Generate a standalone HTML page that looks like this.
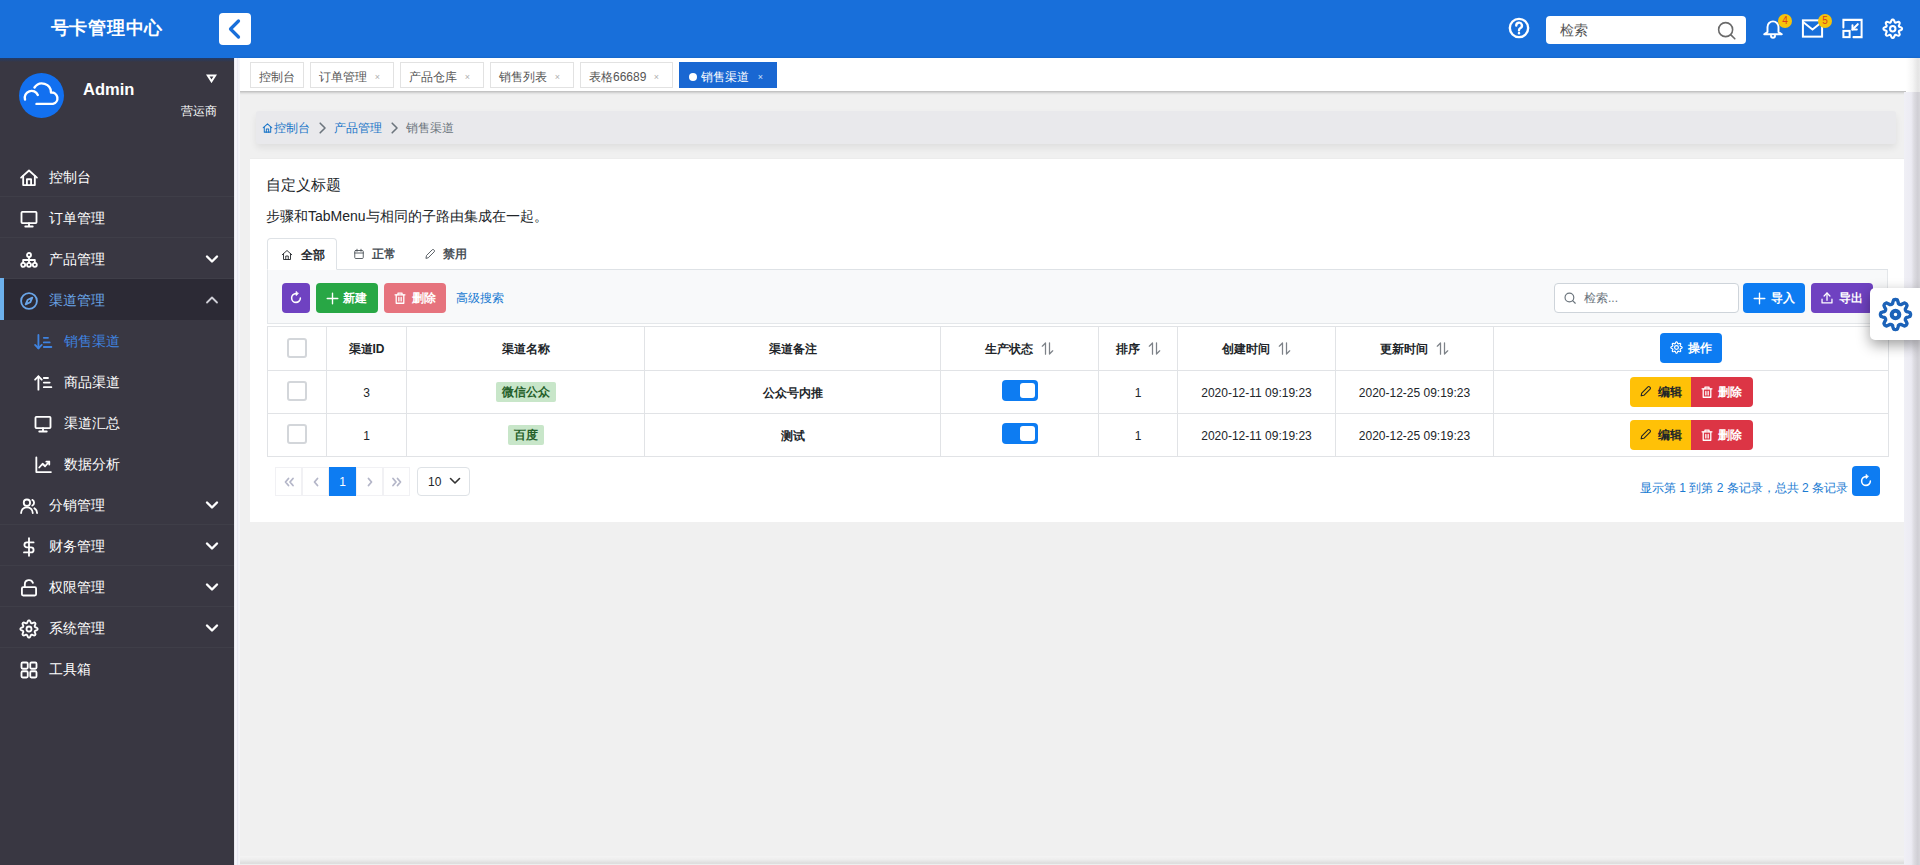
<!DOCTYPE html>
<html lang="zh">
<head>
<meta charset="utf-8">
<title>号卡管理中心</title>
<style>
*{box-sizing:border-box;margin:0;padding:0}
html,body{width:1920px;height:865px;overflow:hidden}
body{font-family:"Liberation Sans",sans-serif;font-size:12px;color:#212529;background:#f0f0f0;position:relative}
svg{display:block}
.ic{fill:none;stroke:currentColor;stroke-width:2;stroke-linecap:round;stroke-linejoin:round}
.abs{position:absolute}
/* header */
#hdr{position:absolute;left:0;top:0;width:1920px;height:58px;background:#186fda}
#logo{position:absolute;left:50.5px;top:17px;font-size:18.4px;letter-spacing:.8px;font-weight:bold;color:#fff;line-height:22px;white-space:nowrap}
#collapse{position:absolute;left:219px;top:13px;width:32px;height:32px;background:#fff;border-radius:4px;color:#186fda}
#hsearch{position:absolute;left:1546px;top:16px;width:200px;height:28px;background:#fff;border-radius:4px}
#hsearch span{position:absolute;left:14px;top:6px;font-size:14px;line-height:16px;color:#555}
.badge{position:absolute;width:14px;height:14px;border-radius:7px;background:#f6c30c;color:#d9401a;font-size:10px;line-height:14px;text-align:center}
/* sidebar */
#side{position:absolute;left:0;top:58px;width:234px;height:807px;background:#393742;color:#fff}
#side:before{content:"";position:absolute;left:0;top:0;width:234px;height:4px;background:linear-gradient(180deg,rgba(24,60,120,.75),rgba(40,40,50,0))}
#strip{position:absolute;left:234px;top:58px;width:6px;height:807px;background:linear-gradient(90deg,#dcdce6 0,#f7f7fd 18%,#f4f4fb 45%,#e6e6f1 62%,#f8f8fd 80%,#f3f3f6 100%);z-index:5}
.mi{position:absolute;left:0;width:234px;height:41px;border-bottom:1px solid rgba(255,255,255,.035);font-size:14.4px;line-height:42px;color:#fff}
.mi svg{position:absolute;left:19px;top:11.5px;width:20px;height:20px;stroke-width:2.2}
.mi span{position:absolute;left:49px;top:0;white-space:nowrap}
.mi .chev{left:205px;top:14px;width:14px;height:14px}
.mi.sub svg{left:33px}
.mi.sub span{left:64px}
.mi.sub{border-bottom:none}
.mi.act{background:#2c2a35;color:#6aa5e8;border-bottom-color:transparent}
.mi.act:before{content:"";position:absolute;left:0;top:0;width:4px;height:42px;top:-1px;background:#6cb0ec}
.mi.act .chev{color:#d0d0d8}
.mi.cur{color:#3f83e0}
/* main */
#tabs{position:absolute;left:238px;top:58px;width:1682px;height:33px;background:#fff;box-shadow:0 1px 3px rgba(0,0,0,.3)}
.tab{position:absolute;top:4px;height:26px;border:1px solid #e2e2e2;background:#fff;font-size:12px;line-height:29.500px;color:#555;padding-left:8px;white-space:nowrap}
.tab i{position:absolute;right:13px;top:0;font-style:normal;font-size:9px;color:#b0b0b0}
.tab.on{background:#1967d2;border-color:#1967d2;color:#fff}
.tab.on i{color:#cfe0f8}
#bc{position:absolute;left:256px;top:111px;width:1640px;height:33px;background:#e9e9ec;border-radius:3px;font-size:12px;line-height:34px;box-shadow:0 4px 7px rgba(0,0,0,.07)}
#bc span,#bc svg{position:absolute}
#card{position:absolute;left:250px;top:158px;width:1654px;height:364px;background:#fff;box-shadow:inset 0 1px 0 #ececec}
#vscroll{position:absolute;left:1904px;top:92px;width:16px;height:773px;background:linear-gradient(90deg,#f0f0f6 0,#ecebf3 45%,#dddce2 62%,#d0cfd5 85%,#d6d5da 100%);z-index:4}
#vscroll2{position:absolute;left:1906px;top:58px;width:14px;height:34px;background:linear-gradient(90deg,#fff 0,#f6f6f6 45%,#e4e4e4 85%,#e9e9e9 100%);z-index:4}
#hscroll{position:absolute;left:240px;top:856px;width:1664px;height:9px;background:linear-gradient(180deg,#f4f4f4 0,#ededed 40%,#dcdcdc 82%,#f6f6f6 100%);z-index:3}
#fgear{position:absolute;left:1870px;top:288px;width:50px;height:52px;background:#fff;border-radius:5px 0 0 5px;box-shadow:0 5px 14px rgba(0,0,0,.38);color:#1c62b8;z-index:10}

/* card */
#card .ttl{position:absolute;left:16px;top:17px;font-size:15px;line-height:20px;color:#212529}
#card .desc{position:absolute;left:16px;top:49px;font-size:14px;line-height:18px;color:#212529}
#stline{position:absolute;left:17px;top:111px;width:1621px;height:1px;background:#dee2e6}
.st{position:absolute;top:80px;height:32px;font-size:12px;line-height:32px;color:#495057;white-space:nowrap;font-weight:bold}
.st svg{position:absolute;top:10px;width:12px;height:12px}
.st span{position:absolute;top:0}
.st.on{border:1px solid #dee2e6;border-bottom-color:#fff;border-radius:4px 4px 0 0;background:#fff;color:#212529;font-weight:bold}
#tb{position:absolute;left:17px;top:112px;width:1621px;height:54px;background:#f8f9fa;border:1px solid #e4e7ea;border-top:none}
.btn{position:absolute;top:125px;height:30px;border-radius:4px;color:#fff;font-size:12px;line-height:30px;white-space:nowrap;font-weight:bold}
.btn svg{position:absolute}
.btn span{position:absolute;top:0}
table{position:absolute;left:17px;top:168px;border-collapse:collapse;table-layout:fixed;width:1622px}
td,th{border:1px solid #e1e3e6;text-align:center;vertical-align:middle;font-size:12px;color:#212529;padding:2px 0 0 0;position:relative}
th{height:44px;font-weight:bold}
td{height:43px}
.cb{display:inline-block;width:20px;height:20px;border:2px solid #d3d6da;border-radius:3px;background:#fff;vertical-align:middle;position:relative;top:-2px}
.tag{display:inline-block;height:20px;line-height:20px;padding:0 6px;background:#c8e6c9;color:#256029;font-weight:bold;border-radius:2px;font-size:12px;position:relative;top:-1px}
.sw{display:inline-block;width:36px;height:21px;border-radius:4px;background:#0d7cf2;position:relative;vertical-align:middle;top:-2.500px}
.sw:after{content:"";position:absolute;left:18px;top:3px;width:15px;height:15px;border-radius:3px;background:#fff}
.srt{display:inline-block;vertical-align:middle;margin-left:8px;color:#7d8288;position:relative;top:-1.500px}
.pg{position:absolute;top:309px;width:27px;height:29px;border:1px solid #f1f1f4;background:#fff;color:#b4b6c8}
.pg svg{position:absolute;left:6px;top:8px}
</style>
</head>
<body>

<!-- ============ HEADER ============ -->
<div id="hdr">
  <div id="logo">号卡管理中心</div>
  <div id="collapse"><svg class="ic" viewBox="0 0 32 32" width="32" height="32" style="stroke-width:3.2"><path d="M19.5 8 L11.5 16 L19.5 24"/></svg></div>
  
  <!-- help -->
  <svg class="ic abs" style="left:1508px;top:17px;color:#fff;stroke-width:2.600" width="22" height="22" viewBox="0 0 24 24"><circle cx="12" cy="12" r="10"/><path d="M9 9.3a3.1 3.1 0 1 1 4.6 2.7c-1 .6-1.6 1.2-1.6 2.4"/><path d="M12 17.4v.4"/></svg>
  <!-- search -->
  <div id="hsearch"><span>检索</span>
    <svg class="ic abs" style="left:170px;top:3.500px;color:#6a6a6a;stroke-width:1.800" width="21" height="21" viewBox="0 0 24 24"><circle cx="11" cy="11" r="8"/><path d="M17 17l4.5 4.5"/></svg>
  </div>
  <!-- bell -->
  <svg class="ic abs" style="left:1762px;top:17px;color:#fff;stroke-width:2.1" width="22" height="22" viewBox="0 0 24 24"><path d="M6 16.300V10.800a6 6 0 0 1 12 0v5.500l3.600 2.500H2.400z"/><path d="M9.800 20.500a2.200 2.200 0 0 0 4.400 0"/></svg>
  <div class="badge" style="left:1778px;top:14px">4</div>
  <!-- mail -->
  <svg class="ic abs" style="left:1801px;top:17px;color:#fff;stroke-width:2.1;stroke-linejoin:miter" width="23" height="23" viewBox="0 0 24 24"><rect x="2" y="3.5" width="20" height="17"/><path d="M2.5 5.5L12 13l9.5-7.5"/></svg>
  <div class="badge" style="left:1818px;top:14px">5</div>
  <!-- fullscreen exit -->
  <svg class="ic abs" style="left:1841px;top:17px;color:#fff;stroke-width:2.1;stroke-linejoin:miter" width="23" height="23" viewBox="0 0 24 24"><path d="M2.5 11V3h19v18H13"/><rect x="2.5" y="14.5" width="6.5" height="6.5"/><path d="M17.5 7.5L12 13"/><path d="M12 8.5V13h4.5"/></svg>
  <!-- gear -->
  <svg class="ic abs" style="left:1882px;top:18px;color:#fff;stroke-width:2.300" width="21.500" height="21.500" viewBox="0 0 24 24"><path d="M12.00 1.60L12.99 1.93L13.74 3.27L14.23 4.65L14.83 5.16L15.62 5.23L16.94 4.60L18.42 4.18L19.35 4.65L19.82 5.58L19.40 7.06L18.77 8.38L18.84 9.17L19.35 9.77L20.73 10.26L22.07 11.01L22.40 12.00L22.07 12.99L20.73 13.74L19.35 14.23L18.84 14.83L18.77 15.62L19.40 16.94L19.82 18.42L19.35 19.35L18.42 19.82L16.94 19.40L15.62 18.77L14.83 18.84L14.23 19.35L13.74 20.73L12.99 22.07L12.00 22.40L11.01 22.07L10.26 20.73L9.77 19.35L9.17 18.84L8.38 18.77L7.06 19.40L5.58 19.82L4.65 19.35L4.18 18.42L4.60 16.94L5.23 15.62L5.16 14.83L4.65 14.23L3.27 13.74L1.93 12.99L1.60 12.00L1.93 11.01L3.27 10.26L4.65 9.77L5.16 9.17L5.23 8.38L4.60 7.06L4.18 5.58L4.65 4.65L5.58 4.18L7.06 4.60L8.38 5.23L9.17 5.16L9.77 4.65L10.26 3.27L11.01 1.93Z"/><circle cx="12" cy="12" r="3"/></svg>

</div>

<!-- ============ SIDEBAR ============ -->
<div id="side">
  
  <div class="abs" style="left:19px;top:15px;width:45px;height:45px;border-radius:50%;background:#1270f0"></div>
  <svg class="ic abs" style="left:19px;top:15px;color:#fff;stroke-width:2.400" width="45" height="45" viewBox="0 0 45 45"><path d="M6 26.500a6.800 6.800 0 0 1 12.800-4.500"/><path d="M15.500 14.500a9 9 0 0 1 16.500 5a5.800 5.800 0 0 1 2 11.400H17.500"/></svg>
  <div class="abs" style="left:83px;top:21px;font-size:16.5px;font-weight:bold;line-height:20px;color:#fff">Admin</div>
  <svg class="ic abs" style="left:205.500px;top:16px;color:#fff;stroke-width:2;stroke-linejoin:miter" width="11" height="9" viewBox="0 0 11 9"><path d="M1.800 1.500h7.400L5.500 7.300z"/></svg>
  <div class="abs" style="left:181px;top:45px;font-size:12px;line-height:16px;color:#fff">营运商</div>
  <div class="mi" style="top:98px"><svg class="ic" viewBox="0 0 24 24" ><path d="M2.5 11.5L12 3l9.5 8.5"/><path d="M5 9.5V20.5h14V9.5"/><path d="M9.5 20.5v-7h5v7"/></svg><span>控制台</span></div>
  <div class="mi" style="top:139px"><svg class="ic" viewBox="0 0 24 24" ><rect x="3" y="3.5" width="18" height="13.5" rx="1"/><path d="M7.5 21h9M12 17v4"/></svg><span>订单管理</span></div>
  <div class="mi" style="top:180px"><svg class="ic" viewBox="0 0 24 24" ><circle cx="12" cy="6" r="2.400"/><circle cx="5" cy="17.800" r="2.400"/><circle cx="12" cy="17.800" r="2.400"/><circle cx="19" cy="17.800" r="2.400"/><path d="M12 8.400v7M5 15.400V12h14v3.400"/></svg><span>产品管理</span><svg class="ic chev" viewBox="0 0 14 14" style="stroke-width:2.4"><path d="M2 4.500l5 5 5-5"/></svg></div>
  <div class="mi act" style="top:221px"><svg class="ic" viewBox="0 0 24 24" ><circle cx="12" cy="12" r="9.5"/><path d="M16 8l-2.5 5.5L8 16l2.5-5.5z"/></svg><span>渠道管理</span><svg class="ic chev" viewBox="0 0 14 14" style="stroke-width:1.800"><path d="M2 9.500l5-5 5 5"/></svg></div>
  <div class="mi sub cur" style="top:262px"><svg class="ic" viewBox="0 0 24 24" ><path d="M6.5 3.5v16"/><path d="M2.5 15.5l4 4 4-4"/><path d="M13 7h5M13 12.5h7M13 18h9"/></svg><span>销售渠道</span></div>
  <div class="mi sub" style="top:303px"><svg class="ic" viewBox="0 0 24 24" ><path d="M6.5 20V4"/><path d="M2.5 8l4-4 4 4"/><path d="M13 6h5M13 11.5h7M13 17h9"/></svg><span>商品渠道</span></div>
  <div class="mi sub" style="top:344px"><svg class="ic" viewBox="0 0 24 24" ><rect x="3" y="3.5" width="18" height="13.5" rx="1"/><path d="M7.5 21h9M12 17v4"/></svg><span>渠道汇总</span></div>
  <div class="mi sub" style="top:385px"><svg class="ic" viewBox="0 0 24 24" ><path d="M4 3v17.5h17.5"/><path d="M7.5 15l4-4.5 3 3 5-5.5"/><path d="M16 8h3.5v3.5"/></svg><span>数据分析</span></div>
  <div class="mi" style="top:426px"><svg class="ic" viewBox="0 0 24 24" ><circle cx="9.5" cy="8" r="3.8"/><path d="M2.5 20.5a7 7 0 0 1 14 0"/><path d="M16 4.6a3.8 3.8 0 0 1 0 6.8"/><path d="M18.5 14.6a7 7 0 0 1 3.2 5.9"/></svg><span>分销管理</span><svg class="ic chev" viewBox="0 0 14 14" style="stroke-width:2.4"><path d="M2 4.500l5 5 5-5"/></svg></div>
  <div class="mi" style="top:467px"><svg class="ic" viewBox="0 0 24 24" ><path d="M12 1.5v21"/><path d="M17.5 6.5h-8a3 3 0 0 0 0 6h5a3 3 0 0 1 0 6h-8.500"/></svg><span>财务管理</span><svg class="ic chev" viewBox="0 0 14 14" style="stroke-width:2.4"><path d="M2 4.500l5 5 5-5"/></svg></div>
  <div class="mi" style="top:508px"><svg class="ic" viewBox="0 0 24 24" ><rect x="3.5" y="11" width="17" height="10" rx="1.5"/><path d="M7 11V7.5a5 5 0 0 1 9.700-1.700"/></svg><span>权限管理</span><svg class="ic chev" viewBox="0 0 14 14" style="stroke-width:2.4"><path d="M2 4.500l5 5 5-5"/></svg></div>
  <div class="mi" style="top:549px"><svg class="ic" viewBox="0 0 24 24" ><path d="M12.00 1.60L12.99 1.93L13.74 3.27L14.23 4.65L14.83 5.16L15.62 5.23L16.94 4.60L18.42 4.18L19.35 4.65L19.82 5.58L19.40 7.06L18.77 8.38L18.84 9.17L19.35 9.77L20.73 10.26L22.07 11.01L22.40 12.00L22.07 12.99L20.73 13.74L19.35 14.23L18.84 14.83L18.77 15.62L19.40 16.94L19.82 18.42L19.35 19.35L18.42 19.82L16.94 19.40L15.62 18.77L14.83 18.84L14.23 19.35L13.74 20.73L12.99 22.07L12.00 22.40L11.01 22.07L10.26 20.73L9.77 19.35L9.17 18.84L8.38 18.77L7.06 19.40L5.58 19.82L4.65 19.35L4.18 18.42L4.60 16.94L5.23 15.62L5.16 14.83L4.65 14.23L3.27 13.74L1.93 12.99L1.60 12.00L1.93 11.01L3.27 10.26L4.65 9.77L5.16 9.17L5.23 8.38L4.60 7.06L4.18 5.58L4.65 4.65L5.58 4.18L7.06 4.60L8.38 5.23L9.17 5.16L9.77 4.65L10.26 3.27L11.01 1.93Z"/><circle cx="12" cy="12" r="3"/></svg><span>系统管理</span><svg class="ic chev" viewBox="0 0 14 14" style="stroke-width:2.4"><path d="M2 4.500l5 5 5-5"/></svg></div>
  <div class="mi" style="top:590px;border-bottom:none"><svg class="ic" viewBox="0 0 24 24" ><rect x="3" y="3" width="7.500" height="7.500" rx="1.500"/><rect x="13.500" y="3" width="7.500" height="7.500" rx="1.500"/><rect x="3" y="13.500" width="7.500" height="7.500" rx="1.500"/><rect x="13.500" y="13.500" width="7.500" height="7.500" rx="1.500"/></svg><span>工具箱</span></div>

</div>
<div id="strip"></div>

<!-- ============ MAIN ============ -->
<div id="tabs">
    <div class="tab" style="left:12px;width:54px">控制台</div>
  <div class="tab" style="left:72px;width:84px">订单管理<i>×</i></div>
  <div class="tab" style="left:162px;width:84px">产品仓库<i>×</i></div>
  <div class="tab" style="left:252px;width:84px">销售列表<i>×</i></div>
  <div class="tab" style="left:342px;width:93px">表格66689<i>×</i></div>
  <div class="tab on" style="left:441px;width:98px"><b style="position:absolute;left:9px;top:9.500px;width:8px;height:8px;border-radius:50%;background:#fff"></b><span style="margin-left:13px">销售渠道</span><i>×</i></div>

</div>
<div id="bc">
  
  <svg class="ic" style="left:6px;top:11px;color:#1b76c8;stroke-width:2.200" width="11" height="12" viewBox="0 0 24 24"><path d="M2.500 11.500L12 3l9.500 8.500"/><path d="M5 9.500V21h14V9.500"/><path d="M9.500 21v-7h5v7"/></svg>
  <span style="left:18px;color:#1b76c8">控制台</span>
  <svg class="ic" style="left:62px;top:10px;color:#6c757d;stroke-width:1.600" width="9" height="14" viewBox="0 0 9 14"><path d="M2.200 2.200l4.800 4.800L2.200 11.800"/></svg>
  <span style="left:78px;color:#1b76c8">产品管理</span>
  <svg class="ic" style="left:134px;top:10px;color:#6c757d;stroke-width:1.600" width="9" height="14" viewBox="0 0 9 14"><path d="M2.200 2.200l4.800 4.800L2.200 11.800"/></svg>
  <span style="left:150px;color:#6c757d">销售渠道</span>

</div>
<div id="card">
  
  <div class="ttl">自定义标题</div>
  <div class="desc">步骤和TabMenu与相同的子路由集成在一起。</div>
  <div id="stline"></div>
  <div class="st on" style="left:17px;width:70px"><svg class="ic" style="left:13px;stroke-width:1.800" width="12" height="12" viewBox="0 0 24 24"><path d="M2.500 11.500L12 3l9.500 8.500"/><path d="M5 9.500V21h14V9.500"/><path d="M9.500 21v-7h5v7"/></svg><span style="left:33px">全部</span></div>
  <div class="st" style="left:87px;width:72px"><svg class="ic" style="left:16px;stroke-width:1.800" width="12" height="12" viewBox="0 0 24 24"><rect x="3.500" y="5" width="17" height="16" rx="2"/><path d="M3.500 10h17M8 2.500v4M16 2.500v4"/></svg><span style="left:35px">正常</span></div>
  <div class="st" style="left:159px;width:72px"><svg class="ic" style="left:15px;stroke-width:1.800" width="12" height="12" viewBox="0 0 24 24"><path d="M4 20l1-5L16.500 3.500a2.100 2.100 0 0 1 3 0l1 1a2.100 2.100 0 0 1 0 3L9 19z"/></svg><span style="left:34px">禁用</span></div>
  <div id="tb"></div>

  <div class="btn" style="left:32px;width:28px;background:#6f42c1"><svg class="ic" style="left:7px;top:8px;stroke-width:2.600" width="14" height="14" viewBox="0 0 24 24"><path d="M19.500 12A7.500 7.500 0 1 1 12 4.500"/><path d="M12 1v7l4-3.500z" fill="currentColor" stroke-width="1"/></svg></div>
  <div class="btn" style="left:66px;width:62px;background:#28a745"><svg class="ic" style="left:9px;top:8px;stroke-width:2.200" width="15" height="15" viewBox="0 0 24 24"><path d="M12 3.500v17M3.500 12h17"/></svg><span style="left:27px">新建</span></div>
  <div class="btn" style="left:134px;width:62px;background:#e6737d"><svg class="ic" style="left:9px;top:8px;stroke-width:2.200" width="14" height="14" viewBox="0 0 24 24"><path d="M3.500 6.500h17"/><path d="M8.500 6.500V3.500h7v3"/><path d="M5.500 6.500V21h13V6.500"/><path d="M10 11v6M14 11v6"/></svg><span style="left:28px">删除</span></div>
  <div class="abs" style="left:206px;top:125px;line-height:30px;font-size:12px;color:#1a7bd2">高级搜索</div>
  <div class="abs" style="left:1304px;top:125px;width:185px;height:30px;border:1px solid #ced4da;border-radius:4px;background:#fff"><svg class="ic abs" style="left:8px;top:7px;color:#6c757d;stroke-width:2" width="14" height="14" viewBox="0 0 24 24"><circle cx="11" cy="11" r="7.500"/><path d="M16.500 16.500L21 21"/></svg><span class="abs" style="left:29px;top:0;line-height:28px;font-size:12px;color:#6c757d">检索...</span></div>
  <div class="btn" style="left:1493px;width:62px;background:#0d7cf2"><svg class="ic" style="left:9px;top:8px;stroke-width:2.200" width="15" height="15" viewBox="0 0 24 24"><path d="M12 3.500v17M3.500 12h17"/></svg><span style="left:28px">导入</span></div>
  <div class="btn" style="left:1561px;width:62px;background:#6f42c1"><svg class="ic" style="left:9px;top:8px;stroke-width:2.200" width="14" height="14" viewBox="0 0 24 24"><path d="M3.500 14v6.500h17V14"/><path d="M12 16V3.500"/><path d="M7 8.500l5-5 5 5"/></svg><span style="left:28px">导出</span></div>

  <table>
   <colgroup><col style="width:59px"><col style="width:80px"><col style="width:238px"><col style="width:296px"><col style="width:158px"><col style="width:79px"><col style="width:158px"><col style="width:158px"><col style="width:395px"></colgroup>
   <tr><th><i class="cb"></i></th><th>渠道ID</th><th>渠道名称</th><th>渠道备注</th><th>生产状态<svg class="ic srt" style="stroke-width:1.250" width="13" height="13" viewBox="0 0 13 13"><path d="M4.500 12.200V1M4.500 1L1.300 4.200"/><path d="M8.500 0.800v11.200M8.500 12l3.200-3.200"/></svg></th><th>排序<svg class="ic srt" style="stroke-width:1.250" width="13" height="13" viewBox="0 0 13 13"><path d="M4.500 12.200V1M4.500 1L1.300 4.200"/><path d="M8.500 0.800v11.200M8.500 12l3.200-3.200"/></svg></th><th>创建时间<svg class="ic srt" style="stroke-width:1.250" width="13" height="13" viewBox="0 0 13 13"><path d="M4.500 12.200V1M4.500 1L1.300 4.200"/><path d="M8.500 0.800v11.200M8.500 12l3.200-3.200"/></svg></th><th>更新时间<svg class="ic srt" style="stroke-width:1.250" width="13" height="13" viewBox="0 0 13 13"><path d="M4.500 12.200V1M4.500 1L1.300 4.200"/><path d="M8.500 0.800v11.200M8.500 12l3.200-3.200"/></svg></th><th></th></tr>
   <tr><td><i class="cb"></i></td><td>3</td><td><span class="tag">微信公众</span></td><td><b>公众号内推</b></td><td><i class="sw"></i></td><td>1</td><td>2020-12-11 09:19:23</td><td>2020-12-25 09:19:23</td><td></td></tr>
   <tr><td><i class="cb"></i></td><td>1</td><td><span class="tag">百度</span></td><td><b>测试</b></td><td><i class="sw"></i></td><td>1</td><td>2020-12-11 09:19:23</td><td>2020-12-25 09:19:23</td><td></td></tr>
  </table>
  <div class="btn" style="left:1410px;top:175px;width:62px;height:30px;line-height:30px;background:#0d7cf2"><svg class="ic" style="left:10px;top:8px;stroke-width:2.200" width="13" height="13" viewBox="0 0 24 24"><path d="M12.00 1.60L12.99 1.93L13.74 3.27L14.23 4.65L14.83 5.16L15.62 5.23L16.94 4.60L18.42 4.18L19.35 4.65L19.82 5.58L19.40 7.06L18.77 8.38L18.84 9.17L19.35 9.77L20.73 10.26L22.07 11.01L22.40 12.00L22.07 12.99L20.73 13.74L19.35 14.23L18.84 14.83L18.77 15.62L19.40 16.94L19.82 18.42L19.35 19.35L18.42 19.82L16.94 19.40L15.62 18.77L14.83 18.84L14.23 19.35L13.74 20.73L12.99 22.07L12.00 22.40L11.01 22.07L10.26 20.73L9.77 19.35L9.17 18.84L8.38 18.77L7.06 19.40L5.58 19.82L4.65 19.35L4.18 18.42L4.60 16.94L5.23 15.62L5.16 14.83L4.65 14.23L3.27 13.74L1.93 12.99L1.60 12.00L1.93 11.01L3.27 10.26L4.65 9.77L5.16 9.17L5.23 8.38L4.60 7.06L4.18 5.58L4.65 4.65L5.58 4.18L7.06 4.60L8.38 5.23L9.17 5.16L9.77 4.65L10.26 3.27L11.01 1.93Z"/><circle cx="12" cy="12" r="3.500"/></svg><span style="left:28px">操作</span></div>
  <div class="btn" style="left:1380px;top:219px;width:61px;background:#ffc107;color:#212529;border-radius:4px 0 0 4px"><svg class="ic" style="left:9px;top:8px;stroke-width:2" width="13" height="13" viewBox="0 0 24 24"><path d="M4 20l1-5L16.500 3.500a2.100 2.100 0 0 1 3 0l1 1a2.100 2.100 0 0 1 0 3L9 19z"/></svg><span style="left:28px">编辑</span></div><div class="btn" style="left:1441px;top:219px;width:62px;background:#dc3545;border-radius:0 4px 4px 0"><svg class="ic" style="left:9px;top:8px;stroke-width:2.200" width="14" height="14" viewBox="0 0 24 24"><path d="M3.500 6.500h17"/><path d="M8.500 6.500V3.500h7v3"/><path d="M5.500 6.500V21h13V6.500"/><path d="M10 11v6M14 11v6"/></svg><span style="left:27px">删除</span></div>
  <div class="btn" style="left:1380px;top:262px;width:61px;background:#ffc107;color:#212529;border-radius:4px 0 0 4px"><svg class="ic" style="left:9px;top:8px;stroke-width:2" width="13" height="13" viewBox="0 0 24 24"><path d="M4 20l1-5L16.500 3.500a2.100 2.100 0 0 1 3 0l1 1a2.100 2.100 0 0 1 0 3L9 19z"/></svg><span style="left:28px">编辑</span></div><div class="btn" style="left:1441px;top:262px;width:62px;background:#dc3545;border-radius:0 4px 4px 0"><svg class="ic" style="left:9px;top:8px;stroke-width:2.200" width="14" height="14" viewBox="0 0 24 24"><path d="M3.500 6.500h17"/><path d="M8.500 6.500V3.500h7v3"/><path d="M5.500 6.500V21h13V6.500"/><path d="M10 11v6M14 11v6"/></svg><span style="left:27px">删除</span></div>

  <div class="pg" style="left:25px"><svg class="ic" width="14" height="12" viewBox="0 0 14 12" style="stroke-width:1.800"><path d="M6.500 2.500L3.500 6l3 3.500M11 2.500L8 6l3 3.500"/></svg></div>
  <div class="pg" style="left:52px"><svg class="ic" width="14" height="12" viewBox="0 0 14 12" style="stroke-width:1.800"><path d="M8.500 2.500L5.500 6l3 3.500"/></svg></div>
  <div class="pg" style="left:79px;background:#0d7cf2;border-color:#0d7cf2;color:#fff;font-size:12px;line-height:29px;text-align:center;top:309px">1</div>
  <div class="pg" style="left:106px"><svg class="ic" width="14" height="12" viewBox="0 0 14 12" style="stroke-width:1.800"><path d="M5.500 2.500L8.500 6l-3 3.500"/></svg></div>
  <div class="pg" style="left:133px"><svg class="ic" width="14" height="12" viewBox="0 0 14 12" style="stroke-width:1.800"><path d="M3 2.500L6 6l-3 3.500M7.500 2.500L10.500 6l-3 3.500"/></svg></div>
  <div class="abs" style="left:167px;top:309px;width:53px;height:29px;border:1px solid #dee2e6;border-radius:4px;background:#fff;font-size:12px;line-height:29px"><span class="abs" style="left:10px;top:0">10</span><svg class="ic abs" style="left:31px;top:8px;stroke-width:1.600;color:#333" width="12" height="10" viewBox="0 0 12 10"><path d="M1.500 2.500L6 7l4.500-4.500"/></svg></div>
  <div class="abs" style="right:56px;top:322px;font-size:12px;line-height:16px;color:#1a7bd2;white-space:nowrap">显示第 1 到第 2 条记录，总共 2 条记录</div>
  <div class="btn" style="left:1602px;top:308px;width:28px;background:#0d7cf2"><svg class="ic" style="left:7px;top:8px;stroke-width:2.600" width="14" height="14" viewBox="0 0 24 24"><path d="M19.500 12A7.500 7.500 0 1 1 12 4.500"/><path d="M12 1v7l4-3.500z" fill="currentColor" stroke-width="1"/></svg></div>

</div>

<div id="vscroll"></div>
<div id="vscroll2"></div>
<div id="hscroll"></div>
<div id="fgear">
  <svg class="ic abs" style="left:8px;top:9px;stroke-width:2.300" width="35" height="35" viewBox="0 0 24 24"><path d="M12.00 1.65L12.67 1.76L13.30 2.10L13.74 3.27L14.02 4.45L14.42 4.86L14.85 5.12L15.33 5.24L15.91 5.23L16.94 4.60L18.08 4.08L18.77 4.28L19.32 4.68L19.72 5.23L19.92 5.92L19.40 7.06L18.77 8.09L18.76 8.67L18.88 9.15L19.14 9.58L19.55 9.98L20.73 10.26L21.90 10.70L22.24 11.33L22.35 12.00L22.24 12.67L21.90 13.30L20.73 13.74L19.55 14.02L19.14 14.42L18.88 14.85L18.76 15.33L18.77 15.91L19.40 16.94L19.92 18.08L19.72 18.77L19.32 19.32L18.77 19.72L18.08 19.92L16.94 19.40L15.91 18.77L15.33 18.76L14.85 18.88L14.42 19.14L14.02 19.55L13.74 20.73L13.30 21.90L12.67 22.24L12.00 22.35L11.33 22.24L10.70 21.90L10.26 20.73L9.98 19.55L9.58 19.14L9.15 18.88L8.67 18.76L8.09 18.77L7.06 19.40L5.92 19.92L5.23 19.72L4.68 19.32L4.28 18.77L4.08 18.08L4.60 16.94L5.23 15.91L5.24 15.33L5.12 14.85L4.86 14.42L4.45 14.02L3.27 13.74L2.10 13.30L1.76 12.67L1.65 12.00L1.76 11.33L2.10 10.70L3.27 10.26L4.45 9.98L4.86 9.58L5.12 9.15L5.24 8.67L5.23 8.09L4.60 7.06L4.08 5.92L4.28 5.23L4.68 4.68L5.23 4.28L5.92 4.08L7.06 4.60L8.09 5.23L8.67 5.24L9.15 5.12L9.58 4.86L9.98 4.45L10.26 3.27L10.70 2.10L11.33 1.76Z"/><circle cx="12" cy="12" r="2.600" style="stroke-width:2.800"/></svg>
</div>

</body>
</html>
